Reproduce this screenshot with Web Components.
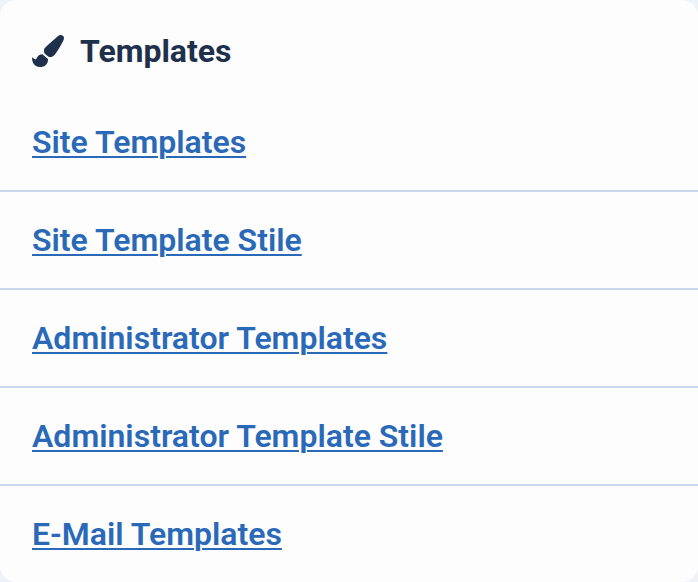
<!doctype html>
<html><head><meta charset="utf-8"><style>
html,body{margin:0;padding:0;background:#eef2f9}
</style></head><body>
<template id="t-card"><style>
:host{display:block;box-sizing:border-box;width:698px;height:582px;background:#fdfdfe;border-radius:16px;padding:0 32px;font-family:Roboto,sans-serif;overflow:hidden}
header{display:flex;align-items:center;gap:16px;height:94px;padding-top:8px;box-sizing:border-box;color:#1f304c;font-size:32px;font-weight:700;line-height:40px}
svg{width:32px;height:32px;fill:currentColor;display:block}
</style><header><svg viewBox="0 0 512 512"><path d="M167.02 309.34c-40.12 2.58-76.53 17.86-97.19 72.3-2.35 6.21-8 9.98-14.59 9.98-11.11 0-45.46-27.67-55.25-34.35C0 439.62 37.93 512 128 512c75.86 0 128-43.77 128-120.19 0-3.11-.65-6.08-.97-9.13l-88.01-73.34zM457.89 0c-15.16 0-29.37 6.71-40.21 16.45C213.27 199.05 192 203.34 192 257.09c0 13.7 3.25 26.76 8.73 38.7l63.82 53.18c7.21 1.8 14.64 3.03 22.39 3.03 62.11 0 98.11-45.47 211.16-256.46 7.38-14.35 13.9-29.85 13.9-45.99C512 20.64 486 0 457.89 0z"/></svg><span><slot name="title"></slot></span></header><slot></slot></template>
<template id="t-row"><style>
:host{display:block;margin:0 -32px;padding:0 32px;height:98px;box-sizing:border-box;border-bottom:2px solid #cbd8ec;font-size:32px;font-weight:575;line-height:96px}
:host(:last-child){border-bottom:0}
a{color:#2a69b8;text-decoration:underline;text-decoration-thickness:2px;text-underline-offset:3px}
</style><a href="#"><slot></slot></a></template>
<tpl-card><span slot="title">Templates</span>
<tpl-row>Site Templates</tpl-row>
<tpl-row>Site Template Stile</tpl-row>
<tpl-row>Administrator Templates</tpl-row>
<tpl-row>Administrator Template Stile</tpl-row>
<tpl-row>E-Mail Templates</tpl-row>
</tpl-card>
<script>
for (const [n,id] of [['tpl-card','t-card'],['tpl-row','t-row']]) {
  customElements.define(n, class extends HTMLElement {
    constructor(){super();this.attachShadow({mode:'open'}).append(document.getElementById(id).content.cloneNode(true));}
  });
}
</script>
</body></html>
